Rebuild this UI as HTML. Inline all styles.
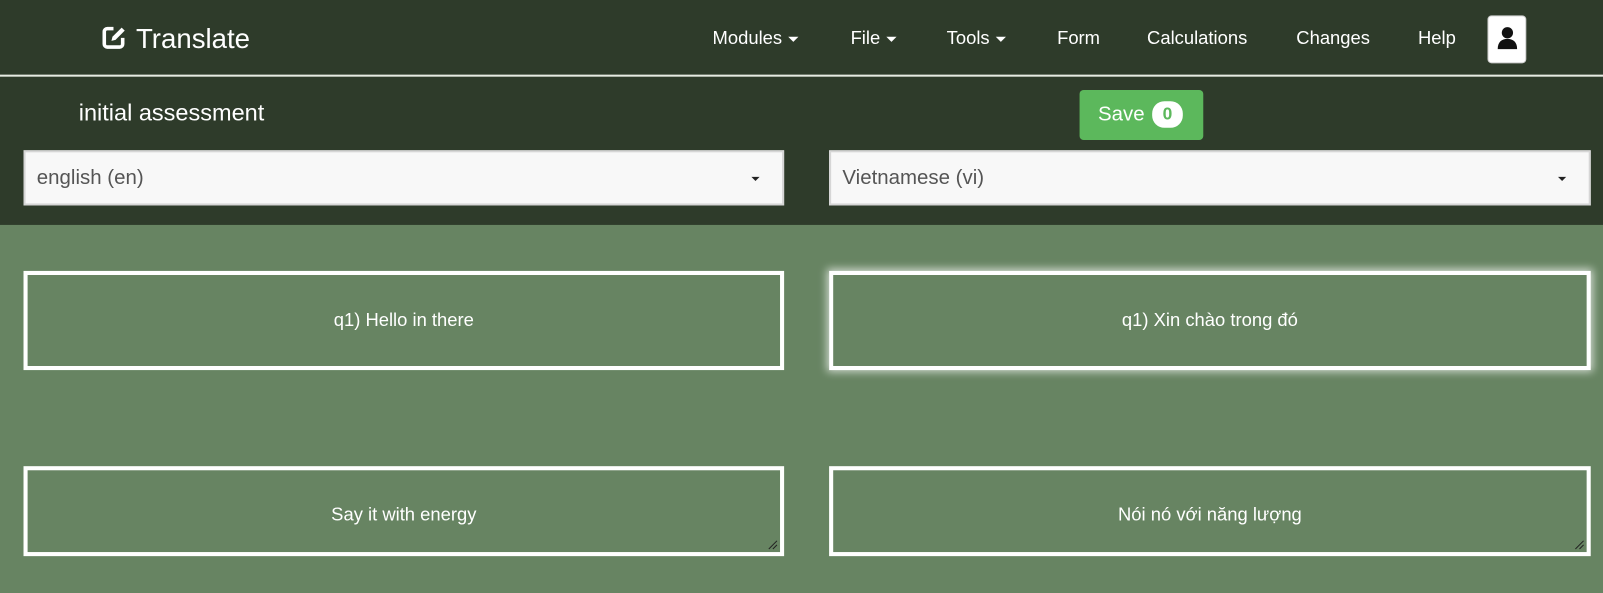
<!DOCTYPE html>
<html><head><meta charset="utf-8"><style>
*{box-sizing:border-box;margin:0;padding:0}
html,body{width:1603px;height:593px;overflow:hidden;background:#678462}
body{font-family:"Liberation Sans","Noto Sans CJK SC",sans-serif;position:relative}
#w{position:absolute;left:0;top:0;width:1568px;height:580px;transform:scale(1.02232);transform-origin:0 0}
.top{position:absolute;left:0;top:0;width:1568px;height:220px;background:#2e3b2a}
.line{position:absolute;left:0;top:73px;width:1568px;height:2px;background:#e6ebe3}
.t{position:absolute;color:#fff;white-space:nowrap}
.nav{font-size:18px;top:27px}
.caret{display:inline-block;width:0;height:0;border-left:5px solid transparent;border-right:5px solid transparent;border-top:5px solid #fff;vertical-align:middle;margin-left:6px}
.user{position:absolute;left:1455px;top:15px;width:38px;height:47px;background:#fff;border-radius:4px;border:1px solid #ccc}
.save{position:absolute;left:1056px;top:88px;width:121px;height:49px;background:#5cb85c;border-radius:4px;color:#fff;font-size:20px}
.badge{display:inline-block;background:#fff;color:#5cb85c;border-radius:12px;width:30px;height:26px;text-align:center;line-height:26px;font-weight:bold;font-size:17px;vertical-align:middle}
.sel{position:absolute;top:147px;height:54px;background:#f8f8f8;border:2px solid #d6d6d6;color:#555;font-size:20px;padding:14px 11px}
.sel .c{position:absolute;right:22px;top:24px;border-left:4px solid transparent;border-right:4px solid transparent;border-top:4px solid #222}
.box{position:absolute;border:4px solid #fff;color:#fff;font-size:18px;text-align:center}
.rs{position:absolute;right:2px;bottom:2px}
</style></head><body><div id="w">
<div class="top"></div><div class="line"></div>
<svg style="position:absolute;left:99px;top:24px" width="26" height="26" viewBox="0 0 26 26"><path d="M12 4H6a3 3 0 0 0-3 3v12a3 3 0 0 0 3 3h12a3 3 0 0 0 3-3v-6" fill="none" stroke="#fff" stroke-width="3.5"/><path d="M10 16l1-4 9-9 3 3-9 9z" fill="#fff"/></svg>
<div class="t" style="left:133px;top:23px;font-size:27px">Translate</div>
<div class="t nav" style="left:697px">Modules<span class="caret"></span></div>
<div class="t nav" style="left:832px">File<span class="caret"></span></div>
<div class="t nav" style="left:926px">Tools<span class="caret"></span></div>
<div class="t nav" style="left:1034px">Form</div>
<div class="t nav" style="left:1122px">Calculations</div>
<div class="t nav" style="left:1268px">Changes</div>
<div class="t nav" style="left:1387px">Help</div>
<div class="user"><svg style="position:absolute;left:8px;top:9px" width="21" height="24" viewBox="0 0 21 24"><circle cx="10.5" cy="7" r="5.5" fill="#111"/><path d="M1 23c0-7 4-10 9.5-10S20 16 20 23z" fill="#111"/></svg></div>
<div class="t" style="left:77px;top:97px;font-size:23px">initial assessment</div>
<div class="save"><span style="position:absolute;left:18px;top:13px">Save</span><span class="badge" style="position:absolute;left:71px;top:11px">0</span></div>
<div class="sel" style="left:23px;width:744px">english (en)<span class="c"></span></div>
<div class="sel" style="left:811px;width:745px">Vietnamese (vi)<span class="c"></span></div>
<div class="box" style="left:23px;top:265px;width:744px;height:97px;line-height:89px">q1) Hello in there</div>
<div class="box" style="left:811px;top:265px;width:745px;height:97px;line-height:89px;box-shadow:0 0 8px 2px rgba(255,255,255,.7)">q1) Xin chào trong đó</div>
<div class="box" style="left:23px;top:456px;width:744px;height:88px;line-height:86px">Say it with energy<svg class="rs" width="10" height="10"><path d="M1 9L9 1M5 9L9 5" stroke="#222" stroke-width="1"/></svg></div>
<div class="box" style="left:811px;top:456px;width:745px;height:88px;line-height:86px">Nói nó với năng lượng<svg class="rs" width="10" height="10"><path d="M1 9L9 1M5 9L9 5" stroke="#222" stroke-width="1"/></svg></div>
</div></body></html>
